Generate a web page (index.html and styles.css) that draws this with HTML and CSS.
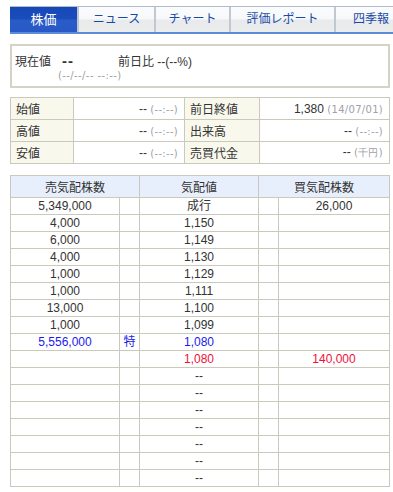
FILE: index.html
```html
<!DOCTYPE html>
<html lang="ja">
<head>
    <meta charset="UTF-8">
    <meta name="viewport" content="width=device-width, initial-scale=1.0">
    <title>株価</title>
    <link rel="stylesheet" href="styles.css">
</head>
<body>
    <div class="pagina">
        <ul class="pestanas">
            <li class="activa t1">株価</li>
            <li class="t2">ニュース</li>
            <li class="t3">チャート</li>
            <li class="t4">評価レポート</li>
            <li class="t5">四季報</li>
        </ul>

        <div class="actual">
            <div class="linea">
                <span class="etiqueta">現在値</span>
                <b class="guion">--</b>
                <span class="cambio">前日比 --(--%)</span>
            </div>
            <div class="hora">(--/--/-- --:--)</div>
        </div>

        <table class="datos">
            <colgroup>
                <col class="c1"><col class="c2"><col class="c3"><col class="c4">
            </colgroup>
            <tr>
                <th>始値</th>
                <td>-- <span class="gris">(--:--)</span></td>
                <th>前日終値</th>
                <td>1,380 <span class="gris">(14/07/01)</span></td>
            </tr>
            <tr>
                <th>高値</th>
                <td>-- <span class="gris">(--:--)</span></td>
                <th>出来高</th>
                <td>-- <span class="gris">(--:--)</span></td>
            </tr>
            <tr>
                <th>安値</th>
                <td>-- <span class="gris">(--:--)</span></td>
                <th>売買代金</th>
                <td>-- <span class="gris">(千円)</span></td>
            </tr>
        </table>

        <table class="tablero">
            <colgroup>
                <col class="b1"><col class="b2"><col class="b3"><col class="b4"><col class="b5">
            </colgroup>
            <thead>
                <tr>
                    <th colspan="2">売気配株数</th>
                    <th>気配値</th>
                    <th colspan="2">買気配株数</th>
                </tr>
            </thead>
            <tbody>
                <tr><td>5,349,000</td><td></td><td>成行</td><td></td><td>26,000</td></tr>
                <tr><td>4,000</td><td></td><td>1,150</td><td></td><td></td></tr>
                <tr><td>6,000</td><td></td><td>1,149</td><td></td><td></td></tr>
                <tr><td>4,000</td><td></td><td>1,130</td><td></td><td></td></tr>
                <tr><td>1,000</td><td></td><td>1,129</td><td></td><td></td></tr>
                <tr><td>1,000</td><td></td><td>1,111</td><td></td><td></td></tr>
                <tr><td>13,000</td><td></td><td>1,100</td><td></td><td></td></tr>
                <tr><td>1,000</td><td></td><td>1,099</td><td></td><td></td></tr>
                <tr class="azul"><td>5,556,000</td><td>特</td><td>1,080</td><td></td><td></td></tr>
                <tr class="rojo"><td></td><td></td><td>1,080</td><td></td><td>140,000</td></tr>
                <tr><td></td><td></td><td>--</td><td></td><td></td></tr>
                <tr><td></td><td></td><td>--</td><td></td><td></td></tr>
                <tr><td></td><td></td><td>--</td><td></td><td></td></tr>
                <tr><td></td><td></td><td>--</td><td></td><td></td></tr>
                <tr><td></td><td></td><td>--</td><td></td><td></td></tr>
                <tr><td></td><td></td><td>--</td><td></td><td></td></tr>
                <tr><td></td><td></td><td>--</td><td></td><td></td></tr>
            </tbody>
        </table>
    </div>
</body>
</html>
```

FILE: styles.css
```css
body{
    margin: 0;
    padding: 0;
    font-family: "Liberation Sans", "Noto Sans CJK JP", sans-serif;
    font-size: 12px;
    color: #333;
    overflow: hidden;
}
.pagina{
    padding-left: 10px;
    width: 380px;
}

/* pestañas */
.pestanas{
    list-style: none;
    margin: 6px 0 0 0;
    padding: 0;
    display: flex;
    width: 400px;
    border-top: 1px solid #b4bccb;
    border-bottom: 2px solid #5a8ad8;
}
.pestanas li{
    flex-shrink: 0;
    height: 25px;
    line-height: 25px;
    text-align: center;
    color: #1a4aa8;
    background: linear-gradient(#fbfcfd 0, #f7f8fa 48%, #e9eaeb 52%, #ebecec 100%);
    border-left: 2px solid #c2c8d2;
}
.pestanas li.activa{
    color: #fff;
    font-size: 13px;
    border-left: none;
    background: linear-gradient(#1848b8 0, #1a4cbc 48%, #2a5cc8 52%, #2858c6 100%);
}
.t1{ width: 67px; }
.t2{ width: 75px; }
.t3{ width: 73px; }
.t4{ width: 103px; }
.t5{ width: 70px; }

/* precio actual */
.actual{
    margin-top: 10px;
    border: 2px solid #d5d2c6;
    height: 32px;
    padding: 6px 3px 2px 3px;
}
.linea{
    display: flex;
    align-items: center;
    height: 16px;
}
.guion{
    margin-left: 11px;
    font-size: 15px;
    letter-spacing: 1px;
    width: 56px;
}
.hora{
    margin-top: 2px;
    margin-left: 43px;
    height: 12px;
    line-height: 12px;
    font-family: "DejaVu Sans", sans-serif;
    font-size: 10px;
    letter-spacing: 0.4px;
    color: #a0a0a0;
}
.gris{
    font-family: "DejaVu Sans", sans-serif;
    font-size: 10px;
    letter-spacing: 0.3px;
    color: #a0a0a8;
}

/* tabla de datos */
table{
    border-collapse: collapse;
    table-layout: fixed;
    width: 379px;
}
.datos{
    margin-top: 9px;
}
.c1{ width: 63px; }
.c2{ width: 111px; }
.c3{ width: 75px; }
.c4{ width: 130px; }
.datos th, .datos td{
    height: 21px;
    padding: 0 6px 0 5px;
    border: 1px solid #cbc9bc;
    font-weight: normal;
}
.datos th{
    text-align: left;
    background-color: #f8f8ec;
}
.datos td{
    text-align: right;
}

/* tablero de cotizaciones */
.tablero{
    margin-top: 11px;
}
.b1{ width: 109px; }
.b2{ width: 20px; }
.b3{ width: 119px; }
.b4{ width: 20px; }
.b5{ width: 111px; }
.tablero th, .tablero td{
    border: 1px solid #cbc9bc;
    padding: 0;
    text-align: center;
    font-weight: normal;
}
.tablero th{
    height: 21px;
    background-color: #e8effc;
}
.tablero td{
    height: 16px;
    line-height: 16px;
}
.azul td{
    color: #1a1aee;
}
.rojo td{
    color: #f0103a;
}
```
